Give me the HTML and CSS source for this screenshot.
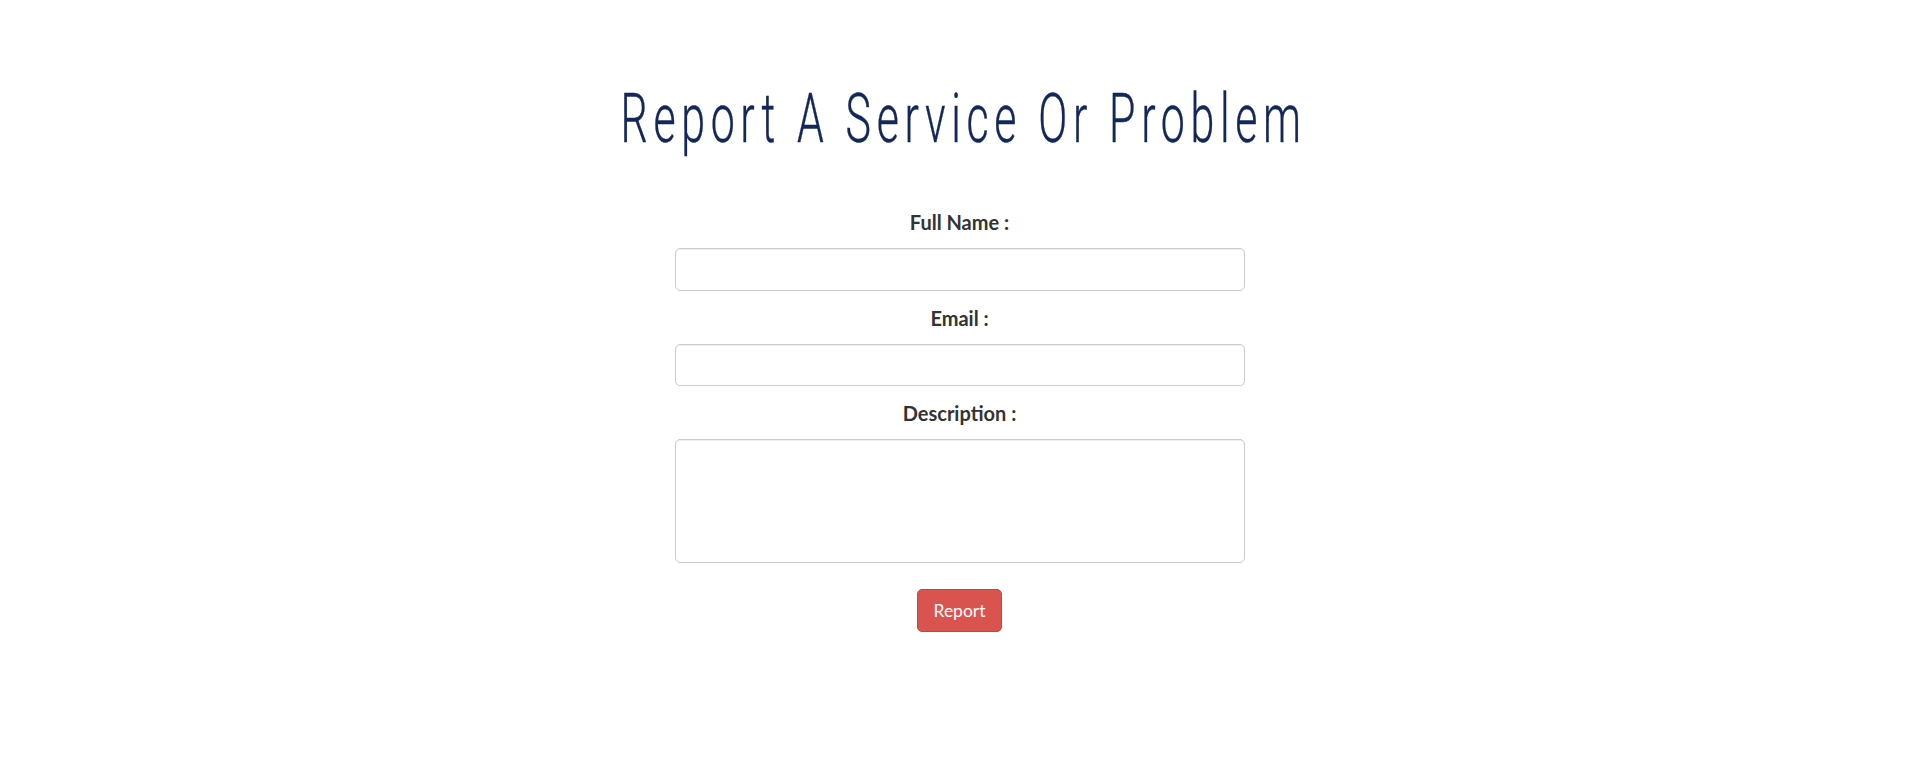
FILE: index.html
```html
<!DOCTYPE html>
<html lang="en">
<head>
<meta charset="utf-8">
<title>Report A Service Or Problem</title>
<link rel="stylesheet" href="styles.css">
</head>
<body>
<main class="page">
  <h1 class="title"><span class="title-text">Report A Service Or Problem</span></h1>
  <form class="report-form">
    <div class="form-group">
      <label class="form-label" for="name">Full Name :</label>
      <input class="form-control" id="name" type="text">
    </div>
    <div class="form-group">
      <label class="form-label" for="email">Email :</label>
      <input class="form-control" id="email" type="email">
    </div>
    <div class="form-group">
      <label class="form-label" for="desc">Description :</label>
      <textarea class="form-control form-textarea" id="desc"></textarea>
    </div>
    <div class="actions">
      <button class="btn-report" type="button">Report</button>
    </div>
  </form>
</main>
</body>
</html>
```

FILE: styles.css
```css
html, body {
  margin: 0;
  padding: 0;
  background: #ffffff;
}

.page {
  display: flex;
  flex-direction: column;
  align-items: center;
  padding-top: 82px;
  font-family: Lato, "Open Sans", sans-serif;
}

.title {
  margin: 0;
  width: 100%;
  text-align: center;
  font-family: Roboto, sans-serif;
  font-weight: 300;
  font-size: 68px;
  line-height: 74px;
  color: #13275a;
}

.title-text {
  display: inline-block;
  transform: scaleX(0.63);
  transform-origin: center;
  letter-spacing: 9px;
  margin-right: -9px;
  -webkit-text-stroke: 0.4px #13275a;
}

.report-form {
  width: 570px;
  margin-top: 52px;
}

.form-group {
  display: flex;
  flex-direction: column;
  margin-bottom: 13px;
}

.form-label {
  display: block;
  text-align: center;
  font-weight: 700;
  font-size: 20px;
  line-height: 28px;
  color: #333333;
  margin-bottom: 12px;
}

.form-control {
  box-sizing: border-box;
  width: 100%;
  height: 42.5px;
  padding: 7.5px 15px;
  border: 1px solid #cccccc;
  border-radius: 5px;
  box-shadow: inset 0 1px 1px rgba(0, 0, 0, 0.075);
  font-family: Lato, sans-serif;
  font-size: 17.5px;
  color: #555555;
  background: #ffffff;
  outline: none;
}

.form-textarea {
  height: 124px;
  resize: none;
}

.actions {
  display: flex;
  justify-content: center;
  padding-top: 13px;
}

.btn-report {
  box-sizing: border-box;
  height: 42.5px;
  padding: 7.5px 15px;
  font-family: Lato, sans-serif;
  font-size: 17.5px;
  line-height: 25px;
  color: #ffffff;
  background: #d9534f;
  border: 1px solid #d43f3a;
  border-radius: 5px;
  cursor: pointer;
}
```
